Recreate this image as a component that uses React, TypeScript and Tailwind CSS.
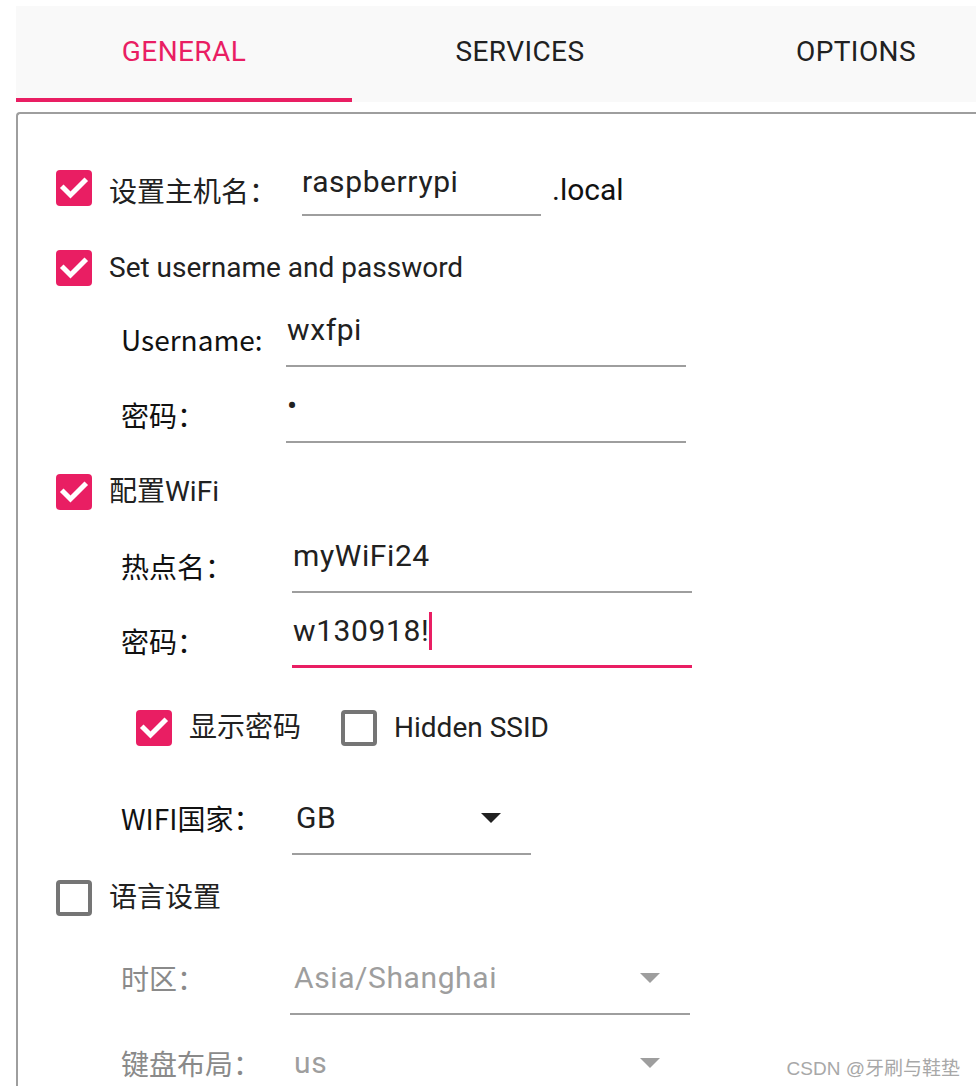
const PINK = '#e91e63';

const roboto = { fontFamily: 'Roboto, "Noto Sans CJK SC", sans-serif' };
const cjk = { fontFamily: '"Noto Sans CJK SC", "Noto Sans", sans-serif' };

function CheckBox({ checked }: { checked: boolean }) {
  if (!checked) {
    return <div className="w-[36px] h-[36px] shrink-0 rounded-[4px] border-[4px] border-[#757575] bg-white" />;
  }
  return (
    <div className="w-[36px] h-[36px] shrink-0 rounded-[4px] bg-[#e91e63] flex items-center justify-center">
      <svg width="36" height="36" viewBox="0 0 36 36">
        <polyline points="7.5,18 14.5,25 28.5,11" fill="none" stroke="#fff" strokeWidth="5" strokeLinecap="square" />
      </svg>
    </div>
  );
}

function CheckRow({ checked, label, className = '' }: { checked: boolean; label: string; className?: string }) {
  return (
    <div className={`flex items-center h-[36px] ${className}`}>
      <CheckBox checked={checked} />
      <span className="ml-[17px] text-[28px] leading-[36px] text-[#212121]" style={roboto}>
        {label}
      </span>
    </div>
  );
}

function Arrow({ grey }: { grey?: boolean }) {
  return (
    <svg width="20" height="10" viewBox="0 0 20 10" className="absolute right-[30px] top-[13px]">
      <polygon points="0,0 20,0 10,10" fill={grey ? '#9e9e9e' : '#212121'} />
    </svg>
  );
}

interface FieldRowProps {
  label: string;
  value: string;
  labelWidth: number;
  fieldWidth: number;
  labelTop?: number;
  className?: string;
  focused?: boolean;
  disabled?: boolean;
  select?: boolean;
}

function FieldRow({ label, value, labelWidth, fieldWidth, labelTop = 9, className = '', focused, disabled, select }: FieldRowProps) {
  const text = disabled ? 'text-[#9e9e9e]' : 'text-[#212121]';
  return (
    <div className={`flex items-start ml-[65px] ${className}`}>
      <div
        className={`text-[28px] leading-[36px] ${disabled ? 'text-[#8a8a8a]' : 'text-[#111]'}`}
        style={{ width: labelWidth, marginTop: labelTop, ...cjk }}
      >
        {label}
      </div>
      <div
        className={`relative h-[55px] ${focused ? 'border-b-[3px] border-[#e91e63]' : 'border-b-2 border-[#9e9e9e]'}`}
        style={{ width: fieldWidth }}
      >
        <div
          className={`flex items-center h-[35px] text-[30px] tracking-[0.6px] ${select ? 'pl-[4px]' : 'pl-[1px]'} ${text}`}
          style={roboto}
        >
          {value}
          {focused && <span className="inline-block shrink-0 w-[3px] h-[38px] bg-[#e91e63]" />}
        </div>
        {select && <Arrow grey={disabled} />}
      </div>
    </div>
  );
}

function Tab({ label, active }: { label: string; active?: boolean }) {
  return (
    <div className="w-[336px] shrink-0 flex flex-col">
      <div
        className="flex-1 flex items-center justify-center text-[28px] tracking-[0.4px]"
        style={{ ...roboto, color: active ? PINK : '#212121' }}
      >
        {label}
      </div>
      <div className={`h-[4px] ${active ? 'bg-[#e91e63]' : ''}`} />
    </div>
  );
}

export default function App() {
  return (
    <div className="relative w-[976px] h-[1086px] overflow-hidden bg-white">
      <div className="mt-[6px] ml-[16px] h-[96px] bg-[#f9f9f9] flex">
        <Tab label="GENERAL" active />
        <Tab label="SERVICES" />
        <Tab label="OPTIONS" />
      </div>

      <div className="mt-[10px] ml-[16px] h-[1100px] border-t-2 border-l-2 border-[#9e9e9e] rounded-tl-[4px] pl-[38px]">
        {/* hostname */}
        <div className="flex items-start mt-[56px] h-[46px]">
          <CheckBox checked />
          <div className="ml-[17px] mt-[2px] w-[193px] text-[28px] leading-[36px] text-[#212121]" style={cjk}>
            设置主机名：
          </div>
          <div className="w-[239px] h-[46px] border-b-2 border-[#9e9e9e]">
            <div className="text-[30px] leading-[24px] tracking-[0.6px] text-[#212121]" style={roboto}>
              raspberrypi
            </div>
          </div>
          <div className="ml-[11px] mt-[2px] text-[30px] leading-[36px] text-[#111]" style={roboto}>
            .local
          </div>
        </div>

        <CheckRow checked label="Set username and password" className="mt-[34px]" />
        <FieldRow label="Username:" value="wxfpi" labelWidth={165} fieldWidth={400} className="mt-[26px]" />
        <FieldRow label="密码：" value="•" labelWidth={165} fieldWidth={400} className="mt-[21px]" />

        <CheckRow checked label="配置WiFi" className="mt-[31px]" />
        <FieldRow label="热点名：" value="myWiFi24" labelWidth={171} fieldWidth={400} labelTop={10} className="mt-[28px]" />
        <FieldRow label="密码：" value="w130918!" labelWidth={171} fieldWidth={400} labelTop={10} className="mt-[20px]" focused />

        <div className="flex items-center mt-[42px] ml-[80px] h-[36px]">
          <CheckBox checked />
          <span className="ml-[17px] text-[28px] text-[#212121]" style={roboto}>
            显示密码
          </span>
          <div className="ml-[40px]">
            <CheckBox checked={false} />
          </div>
          <span className="ml-[17px] text-[28px] text-[#212121]" style={roboto}>
            Hidden SSID
          </span>
        </div>

        <FieldRow label="WIFI国家：" value="GB" labelWidth={171} fieldWidth={239} labelTop={0} className="mt-[54px]" select />

        <CheckRow checked={false} label="语言设置" className="mt-[25px]" />
        <FieldRow label="时区：" value="Asia/Shanghai" labelWidth={169} fieldWidth={400} labelTop={0} className="mt-[44px]" select disabled />
        <FieldRow label="键盘布局：" value="us" labelWidth={169} fieldWidth={400} labelTop={0} className="mt-[30px]" select disabled />
      </div>

      <div
        className="absolute right-[16px] top-[1055px] text-[19px] text-[#a8a8a8]"
        style={{ fontFamily: '"Liberation Sans", "Noto Sans CJK SC", sans-serif' }}
      >
        CSDN @牙刷与鞋垫
      </div>
    </div>
  );
}
